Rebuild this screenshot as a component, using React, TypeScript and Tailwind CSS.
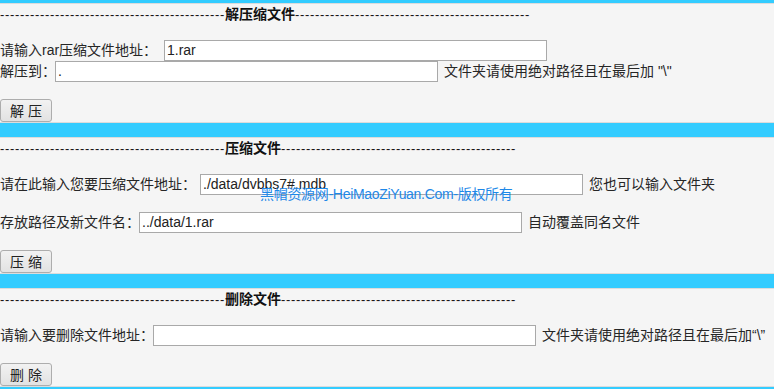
import React from "react";

const font = { fontFamily: '"Liberation Sans", "Noto Sans CJK SC", sans-serif' };

function Header({ title }: { title: string }) {
  const left = "-".repeat(45);
  const right = "-".repeat(47);
  return (
    <div className="h-[21px] leading-[21px] text-[13px] whitespace-nowrap text-[#111]">
      <span className="tracking-[0.67px]">{left}</span>
      <span className="font-bold text-[14px]">{title}</span>
      <span className="tracking-[0.67px]">{right}</span>
    </div>
  );
}

function Row({
  label,
  labelW,
  value,
  note,
  className = "",
}: {
  label: string;
  labelW: string;
  value: string;
  note?: string;
  className?: string;
}) {
  return (
    <div className={"flex items-center h-[21px] text-[14px] text-[#262626] whitespace-nowrap " + className}>
      <span className={labelW}>{label}</span>
      <input
        defaultValue={value}
        className="w-[383px] h-[21px] border border-[#a9a9a9] bg-white px-[2px] text-[14px] text-[#222] outline-none"
        style={font}
      />
      {note && <span className="ml-[6px]">{note}</span>}
    </div>
  );
}

function Btn({ text }: { text: string }) {
  return (
    <button
      className="mt-[17px] w-[52px] h-[23px] rounded-[3px] border border-[#adadad] bg-gradient-to-b from-[#f2f2f2] to-[#e2e2e2] text-[14px] text-[#222] leading-none"
      style={font}
    >
      {text}
    </button>
  );
}

function Section({ children }: { children: React.ReactNode }) {
  return <div className="border-y border-[#dcdcdc] bg-[#f5f5f5] flex flex-col items-start">{children}</div>;
}

export default function App() {
  return (
    <div className="relative w-[774px] h-[389px] overflow-hidden bg-[#f5f5f5]" style={font}>
      <div className="h-[3px] bg-[#33ccff]" />
      <Section>
        <Header title="解压缩文件" />
        <Row className="mt-[15px]" label="请输入rar压缩文件地址：" labelW="w-[164px]" value="1.rar" />
        <Row label="解压到：" labelW="w-[55px]" value="." note={'文件夹请使用绝对路径且在最后加 "\\"'} />
        <Btn text="解 压" />
      </Section>
      <div className="h-[14px] bg-[#33ccff]" />
      <Section>
        <Header title="压缩文件" />
        <Row
          className="mt-[15px]"
          label="请在此输入您要压缩文件地址："
          labelW="w-[200px]"
          value="./data/dvbbs7#.mdb"
          note="您也可以输入文件夹"
        />
        <Row
          className="mt-[17px]"
          label="存放路径及新文件名："
          labelW="w-[139px]"
          value="../data/1.rar"
          note="自动覆盖同名文件"
        />
        <Btn text="压 缩" />
      </Section>
      <div className="h-[14px] bg-[#33ccff]" />
      <Section>
        <Header title="删除文件" />
        <Row
          className="mt-[15px]"
          label="请输入要删除文件地址："
          labelW="w-[153px]"
          value=""
          note={"文件夹请使用绝对路径且在最后加“\\”"}
        />
        <Btn text="删 除" />
      </Section>
      <div className="h-[14px] bg-[#33ccff]" />
      <div className="absolute left-[260px] top-[185px] text-[14px] tracking-[-0.3px] leading-[18px] text-[#1e88e8] whitespace-nowrap">
        黑帽资源网-HeiMaoZiYuan.Com-版权所有
      </div>
    </div>
  );
}
